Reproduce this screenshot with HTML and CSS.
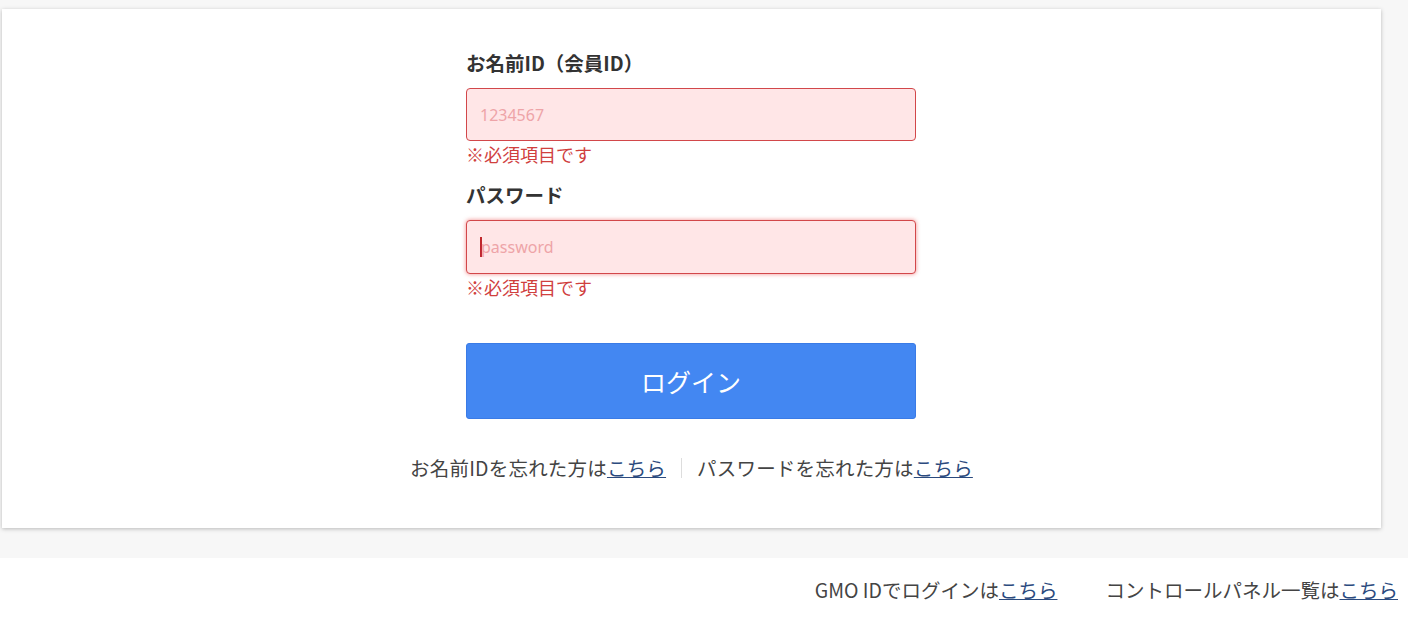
FILE: index.html
```html
<!DOCTYPE html>
<html lang="ja">
<head>
<meta charset="utf-8">
<title>ログイン</title>
<link rel="stylesheet" href="styles.css">
</head>
<body>
<div class="stage">
  <div class="card">
    <form class="login-form">
      <label class="field-label" for="uid">お名前ID（会員ID）</label>
      <input class="field-input field-input-first" id="uid" type="text" placeholder="1234567">
      <p class="field-error">※必須項目です</p>
      <label class="field-label field-label-second" for="pw">パスワード</label>
      <div class="field-input field-input-focus">
        <span class="caret"></span><span class="placeholder">password</span>
      </div>
      <p class="field-error">※必須項目です</p>
      <button class="login-button" type="button">ログイン</button>
    </form>
    <div class="help-links">
      <span>お名前IDを忘れた方は<a href="#">こちら</a></span>
      <span class="sep"></span>
      <span>パスワードを忘れた方は<a href="#">こちら</a></span>
    </div>
  </div>
</div>
<div class="footer">
  <span>GMO IDでログインは<a href="#">こちら</a></span>
  <span>コントロールパネル一覧は<a href="#">こちら</a></span>
</div>
</body>
</html>
```

FILE: styles.css
```css
html, body {
  margin: 0;
  padding: 0;
  background: #ffffff;
}
body {
  font-family: "Noto Sans CJK JP", "Noto Sans", sans-serif;
  color: #3c3c3c;
}
.stage {
  background: #f7f7f7;
  padding: 9px 27px 30px 2px;
}
.card {
  background: #ffffff;
  height: 519px;
  box-sizing: border-box;
  box-shadow: 0 1px 4px rgba(0, 0, 0, 0.25);
  padding-top: 39px;
  display: flex;
  flex-direction: column;
  align-items: center;
}
.login-form {
  width: 450px;
  display: flex;
  flex-direction: column;
  margin-left: -1px;
}
.field-label {
  font-size: 19.5px;
  font-weight: bold;
  line-height: 30px;
  color: #333333;
  margin-bottom: 9px;
}
.field-label-second {
  margin-top: 14px;
}
.field-input {
  box-sizing: border-box;
  width: 450px;
  height: 53px;
  border: 1px solid #d2474a;
  border-radius: 4px;
  background: #ffe6e7;
  padding: 0 13px;
  font-family: "Noto Sans", "Noto Sans CJK JP", sans-serif;
  font-size: 16px;
  color: #333;
  outline: none;
  display: flex;
  align-items: center;
}
.field-input::placeholder {
  color: #eea4a8;
}
.field-input-first {
  margin-top: 1px;
}
.field-input-focus {
  height: 54px;
  margin-top: 1px;
  box-shadow: 0 0 4px rgba(230, 40, 40, 0.55);
}
.caret {
  width: 2px;
  height: 20px;
  background: #c0282c;
  margin-right: -1px;
}
.placeholder {
  color: #eea4a8;
}
.field-error {
  margin: 1px 0 0;
  font-size: 18px;
  line-height: 24px;
  color: #d0403e;
}
.login-button {
  margin-top: 44px;
  width: 450px;
  height: 76px;
  border: 1px solid #3a7be6;
  border-radius: 3px;
  background: #4387f2;
  color: #ffffff;
  font-family: "Noto Sans CJK JP", sans-serif;
  font-size: 25px;
  cursor: pointer;
}
.help-links {
  margin-top: 34px;
  font-size: 19.5px;
  line-height: 30px;
  display: flex;
  align-items: center;
  gap: 15px;
  color: #444444;
}
.help-links > span:first-child, .help-links > span:last-child {
  letter-spacing: 0.2px;
}
.help-links a, .footer a {
  color: #2b4a7e;
  text-decoration: underline;
}
.sep {
  width: 1px;
  height: 20px;
  background: #dddddd;
}
.footer {
  display: flex;
  justify-content: flex-end;
  gap: 48px;
  padding: 16px 10px 0 0;
  font-size: 19.5px;
  line-height: 32px;
  color: #444444;
}
```
